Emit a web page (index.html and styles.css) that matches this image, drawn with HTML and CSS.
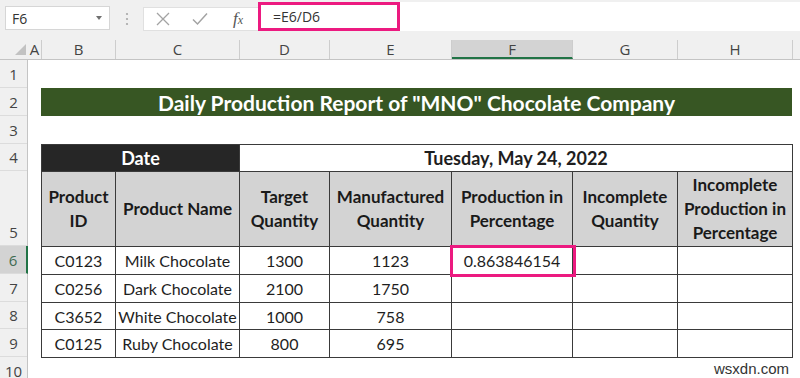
FILE: index.html
```html
<!DOCTYPE html>
<html lang="en">

<head>
    <meta charset="UTF-8">
    <meta name="viewport" content="width=device-width, initial-scale=1.0">
    <title>Daily Production Report</title>
    <link rel="stylesheet" href="styles.css">
</head>

<body>
    <!-- formula bar -->
    <div class="toolbar">
        <div class="name-box">
            <span>F6</span>
            <span class="caret"></span>
        </div>
        <svg class="grip" width="4" height="14" viewBox="0 0 4 14">
            <circle cx="2" cy="2" r="1.1" fill="#a8a8a8" />
            <circle cx="2" cy="7" r="1.1" fill="#a8a8a8" />
            <circle cx="2" cy="12" r="1.1" fill="#a8a8a8" />
        </svg>
        <div class="fx-buttons">
            <svg width="14" height="14" viewBox="0 0 14 14">
                <path d="M1 1 L13 13 M13 1 L1 13" stroke="#a3a3a3" stroke-width="1.3" fill="none" />
            </svg>
            <svg width="16" height="14" viewBox="0 0 16 14">
                <path d="M1 7.5 L5.5 12 L15 1.5" stroke="#a3a3a3" stroke-width="1.5" fill="none" />
            </svg>
            <span class="fx">f<small>x</small></span>
        </div>
        <div class="formula">
            <span class="formula-text">=E6/D6</span>
        </div>
    </div>

    <!-- column letters -->
    <div class="col-heads">
        <div class="corner"><span class="triangle"></span></div>
        <div class="ch w-a">A</div>
        <div class="ch w-b">B</div>
        <div class="ch w-c">C</div>
        <div class="ch w-d">D</div>
        <div class="ch w-e">E</div>
        <div class="ch w-f active">F</div>
        <div class="ch w-g">G</div>
        <div class="ch w-h">H</div>
    </div>

    <div class="sheet">
        <!-- row numbers -->
        <div class="row-heads">
            <div class="rh">1</div>
            <div class="rh">2</div>
            <div class="rh">3</div>
            <div class="rh short">4</div>
            <div class="rh tall">5</div>
            <div class="rh active">6</div>
            <div class="rh">7</div>
            <div class="rh short">8</div>
            <div class="rh">9</div>
            <div class="rh">10</div>
        </div>

        <div class="cells">
            <div class="blank-row"></div>
            <div class="title">Daily Production Report of "MNO" Chocolate Company</div>
            <div class="blank-row"></div>

            <table class="report">
                <colgroup>
                    <col class="w-b">
                    <col class="w-c">
                    <col class="w-d">
                    <col class="w-e">
                    <col class="w-f">
                    <col class="w-g">
                    <col class="w-h">
                </colgroup>
                <tr class="date-row">
                    <td colspan="2" class="date-label">Date</td>
                    <td colspan="5" class="date-value">Tuesday, May 24, 2022</td>
                </tr>
                <tr class="head-row">
                    <th>Product ID</th>
                    <th>Product Name</th>
                    <th>Target Quantity</th>
                    <th>Manufactured Quantity</th>
                    <th>Production in Percentage</th>
                    <th>Incomplete Quantity</th>
                    <th>Incomplete Production in Percentage</th>
                </tr>
                <tr>
                    <td>C0123</td>
                    <td>Milk Chocolate</td>
                    <td>1300</td>
                    <td>1123</td>
                    <td class="selected">0.863846154</td>
                    <td></td>
                    <td></td>
                </tr>
                <tr>
                    <td>C0256</td>
                    <td>Dark Chocolate</td>
                    <td>2100</td>
                    <td>1750</td>
                    <td></td>
                    <td></td>
                    <td></td>
                </tr>
                <tr class="short">
                    <td>C3652</td>
                    <td>White Chocolate</td>
                    <td>1000</td>
                    <td>758</td>
                    <td></td>
                    <td></td>
                    <td></td>
                </tr>
                <tr>
                    <td>C0125</td>
                    <td>Ruby Chocolate</td>
                    <td>800</td>
                    <td>695</td>
                    <td></td>
                    <td></td>
                    <td></td>
                </tr>
            </table>

            <div class="watermark">wsxdn.com</div>
        </div>
    </div>
</body>

</html>
```

FILE: styles.css
```css
* {
    box-sizing: border-box;
}

body {
    margin: 0;
    width: 800px;
    height: 378px;
    overflow: hidden;
    background-color: #ffffff;
    font-family: 'Open Sans', 'Noto Sans', sans-serif;
}

/* formula bar */
.toolbar {
    height: 36px;
    background-color: #f0f0f0;
    display: flex;
    align-items: flex-start;
}

.name-box {
    margin: 6px 0 0 5px;
    width: 105px;
    height: 24px;
    background-color: #ffffff;
    border: 1px solid #d6d6d6;
    display: flex;
    align-items: center;
    justify-content: space-between;
    padding: 0 7px 0 6px;
    font-size: 14px;
    color: #333333;
}

.caret {
    border-left: 3.5px solid transparent;
    border-right: 3.5px solid transparent;
    border-top: 4px solid #707070;
}

.grip {
    margin: 12px 0 0 15px;
}

.fx-buttons {
    margin: 7px 0 0 14px;
    width: 115px;
    height: 24px;
    background-color: #ffffff;
    border: 1px solid #e0e0e0;
    border-right: none;
    display: flex;
    align-items: center;
    padding-left: 12px;
    gap: 22px;
}

.fx {
    font-family: 'Liberation Serif', serif;
    font-style: italic;
    font-size: 17px;
    color: #555555;
    margin-left: 3px;
}

.fx small {
    font-size: 12px;
}

.formula {
    flex: 1;
    height: 29px;
    margin-top: 2px;
    background-color: #ffffff;
}

.formula-text {
    display: inline-flex;
    align-items: center;
    width: 142px;
    height: 29px;
    border: 3px solid #ec1a80;
    padding-left: 12px;
    font-size: 14px;
    color: #333333;
}

/* column and row headers */
.col-heads {
    height: 24px;
    background-color: #f0f0f0;
    border-bottom: 1px solid #c4c4c4;
    display: flex;
    align-items: flex-end;
}

.corner {
    width: 28px;
    height: 24px;
    position: relative;
}

.triangle {
    position: absolute;
    left: 15px;
    top: 9px;
    width: 11px;
    height: 11px;
    background-color: #c2c2c2;
    clip-path: polygon(100% 0, 100% 100%, 0 100%);
}

.ch {
    height: 19px;
    line-height: 18px;
    text-align: center;
    font-size: 15px;
    color: #444444;
    border-right: 1px solid #cdcdcd;
}

.ch.active {
    background-color: #d3d3d3;
    border-bottom: 2px solid #217346;
}

.w-a {
    width: 14px;
}

.w-b {
    width: 74px;
}

.w-c {
    width: 124px;
}

.w-d {
    width: 90px;
}

.w-e {
    width: 122px;
}

.w-f {
    width: 121px;
}

.w-g {
    width: 105px;
}

.w-h {
    width: 115px;
}

.sheet {
    display: flex;
}

.row-heads {
    width: 28px;
    background-color: #f0f0f0;
    border-right: 1px solid #c4c4c4;
    display: flex;
    flex-direction: column;
}

.rh {
    height: 28px;
    display: flex;
    align-items: flex-end;
    justify-content: center;
    padding-bottom: 3px;
    font-size: 15px;
    color: #444444;
    border-bottom: 1px solid #dcdcdc;
}

.rh.short {
    height: 27px;
}

.rh.tall {
    height: 75px;
}

.rh.active {
    background-color: #d3d3d3;
    border-right: 2px solid #217346;
    margin-right: -1px;
    color: #3f6b52;
}

/* sheet content */
.cells {
    padding-left: 13px;
    font-family: 'Lato', 'Liberation Sans', sans-serif;
    color: #1e1e1e;
}

.blank-row {
    height: 28px;
}

.title {
    width: 751px;
    height: 28px;
    background-color: #375623;
    color: #ffffff;
    font-weight: bold;
    font-size: 21px;
    display: flex;
    align-items: center;
    justify-content: center;
}

.report {
    width: 752px;
    table-layout: fixed;
    border-collapse: collapse;
    font-size: 16px;
}

.report td,
.report th {
    border: 1px solid #3a3a3a;
    padding: 0;
    text-align: center;
    height: 28px;
}

.report .short td {
    height: 27px;
}

.date-row td {
    height: 27px;
    font-weight: bold;
    font-size: 18px;
}

.date-label {
    background-color: #262626;
    color: #ffffff;
}

.head-row th {
    height: 75px;
    background-color: #d3d3d3;
    font-size: 17px;
    line-height: 24px;
    color: #1a1a1a;
}

.selected {
    position: relative;
}

.selected::after {
    content: "";
    position: absolute;
    left: -2px;
    top: -2px;
    right: -4px;
    bottom: -3px;
    border: 3px solid #ec1a80;
}

.watermark {
    width: 752px;
    text-align: right;
    padding: 2px 4px 0 0;
    font-family: 'Liberation Sans', sans-serif;
    font-size: 15px;
    line-height: 17px;
    color: #333333;
}
```
